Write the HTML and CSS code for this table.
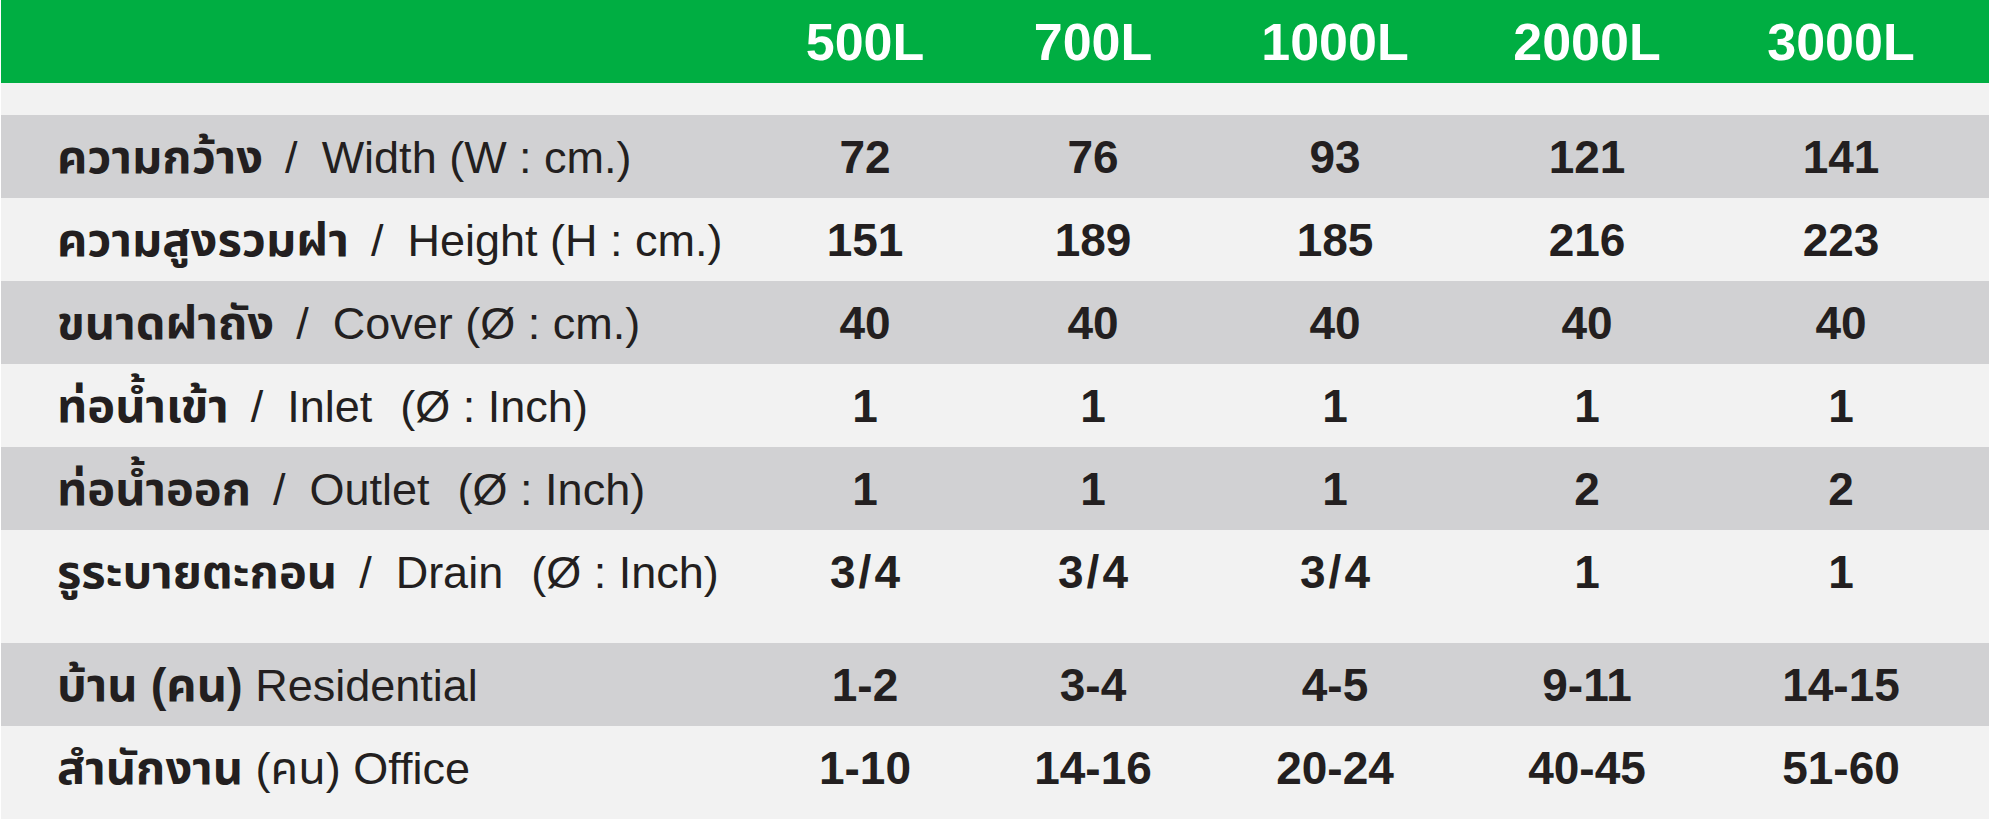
FILE: index.html
```html
<!DOCTYPE html>
<html lang="th">
<head>
<meta charset="utf-8">
<title>Tank specifications</title>
<link rel="stylesheet" href="styles.css">
</head>
<body>
<div class="sheet">
  <div class="row head">
    <div class="label"></div>
    <div class="cell">500L</div>
    <div class="cell">700L</div>
    <div class="cell">1000L</div>
    <div class="cell">2000L</div>
    <div class="cell">3000L</div>
  </div>
  <div class="gap"></div>
  <div class="row dark">
    <div class="label"><b>ความกว้าง</b><span class="sep">/</span>Width (W : cm.)</div>
    <div class="cell">72</div><div class="cell">76</div><div class="cell">93</div><div class="cell">121</div><div class="cell">141</div>
  </div>
  <div class="row">
    <div class="label"><b>ความสูงรวมฝา</b><span class="sep">/</span>Height (H : cm.)</div>
    <div class="cell">151</div><div class="cell">189</div><div class="cell">185</div><div class="cell">216</div><div class="cell">223</div>
  </div>
  <div class="row dark">
    <div class="label"><b>ขนาดฝาถัง</b><span class="sep">/</span>Cover (Ø : cm.)</div>
    <div class="cell">40</div><div class="cell">40</div><div class="cell">40</div><div class="cell">40</div><div class="cell">40</div>
  </div>
  <div class="row">
    <div class="label"><b>ท่อน้ำเข้า</b><span class="sep">/</span>Inlet<span class="wide"></span>(Ø : Inch)</div>
    <div class="cell">1</div><div class="cell">1</div><div class="cell">1</div><div class="cell">1</div><div class="cell">1</div>
  </div>
  <div class="row dark">
    <div class="label"><b>ท่อน้ำออก</b><span class="sep">/</span>Outlet<span class="wide"></span>(Ø : Inch)</div>
    <div class="cell">1</div><div class="cell">1</div><div class="cell">1</div><div class="cell">2</div><div class="cell">2</div>
  </div>
  <div class="row">
    <div class="label"><b>รูระบายตะกอน</b><span class="sep">/</span>Drain<span class="wide"></span>(Ø : Inch)</div>
    <div class="cell">3<span class="slash">/</span>4</div><div class="cell">3<span class="slash">/</span>4</div><div class="cell">3<span class="slash">/</span>4</div><div class="cell">1</div><div class="cell">1</div>
  </div>
  <div class="spacer"></div>
  <div class="row dark">
    <div class="label"><b>บ้าน (คน)</b> Residential</div>
    <div class="cell">1-2</div><div class="cell">3-4</div><div class="cell">4-5</div><div class="cell">9-11</div><div class="cell">14-15</div>
  </div>
  <div class="row">
    <div class="label"><b>สำนักงาน</b> (คน) Office</div>
    <div class="cell">1-10</div><div class="cell">14-16</div><div class="cell">20-24</div><div class="cell">40-45</div><div class="cell">51-60</div>
  </div>
</div>
</body>
</html>
```
FILE: styles.css
```css
html, body {
  margin: 0;
  padding: 0;
  background: #ffffff;
}
body {
  font-family: "Liberation Sans", "Noto Sans Thai", "Noto Sans", sans-serif;
  color: #231f20;
  width: 1989px;
  height: 819px;
  overflow: hidden;
}
.sheet {
  margin-left: 1px;
  background: #f2f2f2;
  height: 819px;
}
.row {
  display: grid;
  grid-template-columns: 750px 228px 228px 256px 248px 260px;
  height: 83px;
  align-items: center;
}
.row.dark {
  background: #d1d1d3;
}
.row.head {
  background: #00ae42;
  color: #ffffff;
}
.gap {
  height: 32px;
}
.spacer {
  height: 30px;
}
.label {
  padding-left: 56px;
  font-size: 45px;
  line-height: 1;
  white-space: nowrap;
  font-weight: 400;
}
.label b {
  font-weight: 700;
  font-size: 47px;
}
.sep {
  display: inline-block;
  margin: 0 24px 0 22px;
}
.wide {
  display: inline-block;
  width: 28px;
}
.slash {
  margin: 0 3px;
}
.cell {
  text-align: center;
  font-size: 46px;
  line-height: 1;
  font-weight: 700;
}
.head .cell {
  font-size: 52px;
  font-weight: 700;
}
```
